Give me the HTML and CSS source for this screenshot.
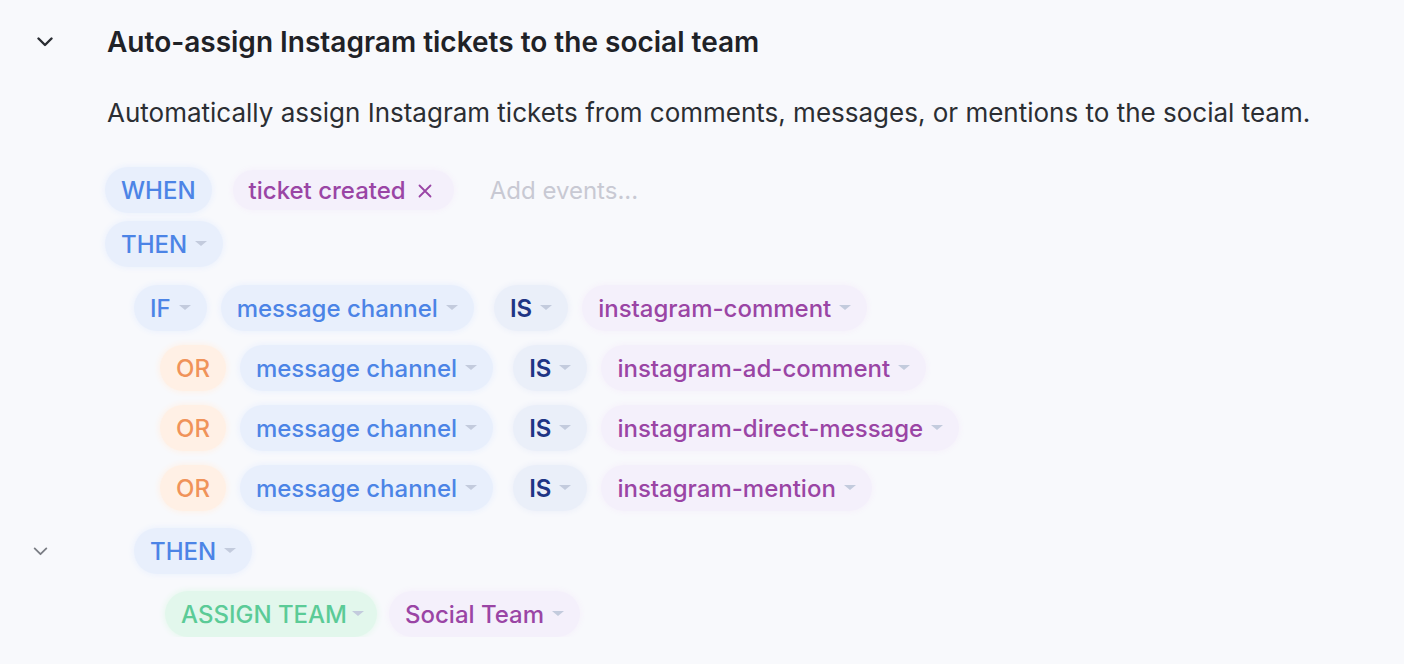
FILE: index.html
```html
<!DOCTYPE html>
<html lang="en">
<head>
<meta charset="utf-8">
<title>Rule</title>
<link rel="stylesheet" href="styles.css">
</head>
<body>
<div class="rule">
  <div class="head">
    <div class="gutter g-head">
      <svg class="chev chev-dark" viewBox="0 0 16 10" width="16" height="10"><path d="M1.5 1.5 L8 8 L14.5 1.5" fill="none" stroke="#2a2d33" stroke-width="2.4" stroke-linecap="round" stroke-linejoin="round"/></svg>
    </div>
    <h1 class="title">Auto-assign Instagram tickets to the social team</h1>
  </div>
  <p class="desc">Automatically assign Instagram tickets from comments, messages, or mentions to the social team.</p>

  <div class="rows">
    <div class="row r-when">
      <div class="gutter"></div>
      <span class="pill blue">WHEN</span>
      <span class="pill purple tag">ticket created<svg class="x" viewBox="0 0 14 14" width="14" height="14"><path d="M1.5 1.5 L12.5 12.5 M12.5 1.5 L1.5 12.5" fill="none" stroke="#9a45a5" stroke-width="1.8" stroke-linecap="round"/></svg></span>
      <span class="placeholder">Add events...</span>
    </div>
    <div class="row r-then">
      <div class="gutter"></div>
      <span class="pill blue">THEN<i class="caret"></i></span>
    </div>
    <div class="row r-if">
      <div class="gutter"></div>
      <div class="indent1"></div>
      <span class="pill blue">IF<i class="caret"></i></span>
      <span class="pill blue">message channel<i class="caret"></i></span>
      <span class="pill navy">IS<i class="caret"></i></span>
      <span class="pill purple">instagram-comment<i class="caret"></i></span>
    </div>
    <div class="row r-or">
      <div class="gutter"></div>
      <div class="indent2"></div>
      <span class="pill orange">OR</span>
      <span class="pill blue">message channel<i class="caret"></i></span>
      <span class="pill navy">IS<i class="caret"></i></span>
      <span class="pill purple">instagram-ad-comment<i class="caret"></i></span>
    </div>
    <div class="row r-or">
      <div class="gutter"></div>
      <div class="indent2"></div>
      <span class="pill orange">OR</span>
      <span class="pill blue">message channel<i class="caret"></i></span>
      <span class="pill navy">IS<i class="caret"></i></span>
      <span class="pill purple">instagram-direct-message<i class="caret"></i></span>
    </div>
    <div class="row r-or">
      <div class="gutter"></div>
      <div class="indent2"></div>
      <span class="pill orange">OR</span>
      <span class="pill blue">message channel<i class="caret"></i></span>
      <span class="pill navy">IS<i class="caret"></i></span>
      <span class="pill purple">instagram-mention<i class="caret"></i></span>
    </div>
    <div class="row r-then2">
      <div class="gutter g-then2">
        <svg class="chev" viewBox="0 0 16 10" width="15" height="9"><path d="M1.5 1.5 L8 8 L14.5 1.5" fill="none" stroke="#7a7d84" stroke-width="2" stroke-linecap="round" stroke-linejoin="round"/></svg>
      </div>
      <div class="indent1"></div>
      <span class="pill blue">THEN<i class="caret"></i></span>
    </div>
    <div class="row r-assign">
      <div class="gutter"></div>
      <div class="indent3"></div>
      <span class="pill green assign">ASSIGN TEAM<i class="caret"></i></span>
      <span class="pill purple">Social Team<i class="caret"></i></span>
    </div>
  </div>
</div>
</body>
</html>
```
FILE: styles.css
```css
* { box-sizing: border-box; }
html, body {
  margin: 0;
  background: #f8f9fc;
}
body {
  font-family: "Inter", "Noto Sans", "Liberation Sans", sans-serif;
  color: #26292e;
}
.rule {
  padding-top: 22px;
}
.head {
  display: flex;
  align-items: center;
  height: 40px;
}
.gutter {
  width: 105px;
  flex: none;
  display: flex;
  align-items: center;
}
.g-head {
  width: 107px;
  padding-left: 37px;
}
.g-then2 {
  padding-left: 33px;
}
.chev { display: block; }
.title {
  margin: 0;
  font-size: 28px;
  font-weight: 600;
  color: #1f2227;
}
.desc {
  margin: 35px 0 0 107px;
  font-size: 26px;
  line-height: 32px;
  color: #2b2e33;
}
.rows {
  margin-top: 38px;
  display: flex;
  flex-direction: column;
}
.row {
  display: flex;
  align-items: center;
  height: 46px;
}
.r-then { margin-top: 8px; }
.r-if { margin-top: 18px; }
.r-or { margin-top: 14px; }
.r-then2 { margin-top: 17px; }
.r-assign { margin-top: 17px; }
.indent1 { width: 29px; flex: none; }
.indent2 { width: 55px; flex: none; }
.indent3 { width: 60px; flex: none; }

.pill {
  display: inline-flex;
  align-items: center;
  height: 46px;
  padding: 0 16px;
  border-radius: 23px;
  font-size: 24px;
  font-weight: 500;
  margin-right: 14px;
  white-space: nowrap;
}
.pill .caret {
  display: inline-block;
  width: 0;
  height: 0;
  margin-left: 8px;
  border-left: 6px solid transparent;
  border-right: 6px solid transparent;
  border-top: 5px solid #c3cbdd;
  margin-top: -2px;
}
.assign .caret { margin-left: 5px; }
.assign { padding-right: 13px; margin-right: 12px; }
.blue {
  color: #4c84e6;
  background: #e8effc;
  box-shadow: 0 0 5px 2px #eef3fd;
}
.navy {
  color: #1f3585;
  background: #eaeff9;
  box-shadow: 0 0 5px 2px #eff2fa;
  font-weight: 600;
  margin-left: 6px;
}
.purple {
  color: #9a45a5;
  background: #f4f0fb;
  box-shadow: 0 0 5px 2px #f6f3fb;
}
.orange {
  color: #f0935a;
  background: #fff0e5;
  box-shadow: 0 0 5px 2px #fdf3ec;
}
.green {
  color: #5bcb97;
  background: #e2f7ec;
  box-shadow: 0 0 5px 2px #eaf8f1;
}
.tag { height: 40px; margin-left: 7px; padding-right: 22px; }
.x {
  display: block;
  margin-left: 12px;
  margin-top: 1px;
}
.placeholder {
  font-size: 24px;
  color: #c8c9d3;
  margin-left: 22px;
}
```
